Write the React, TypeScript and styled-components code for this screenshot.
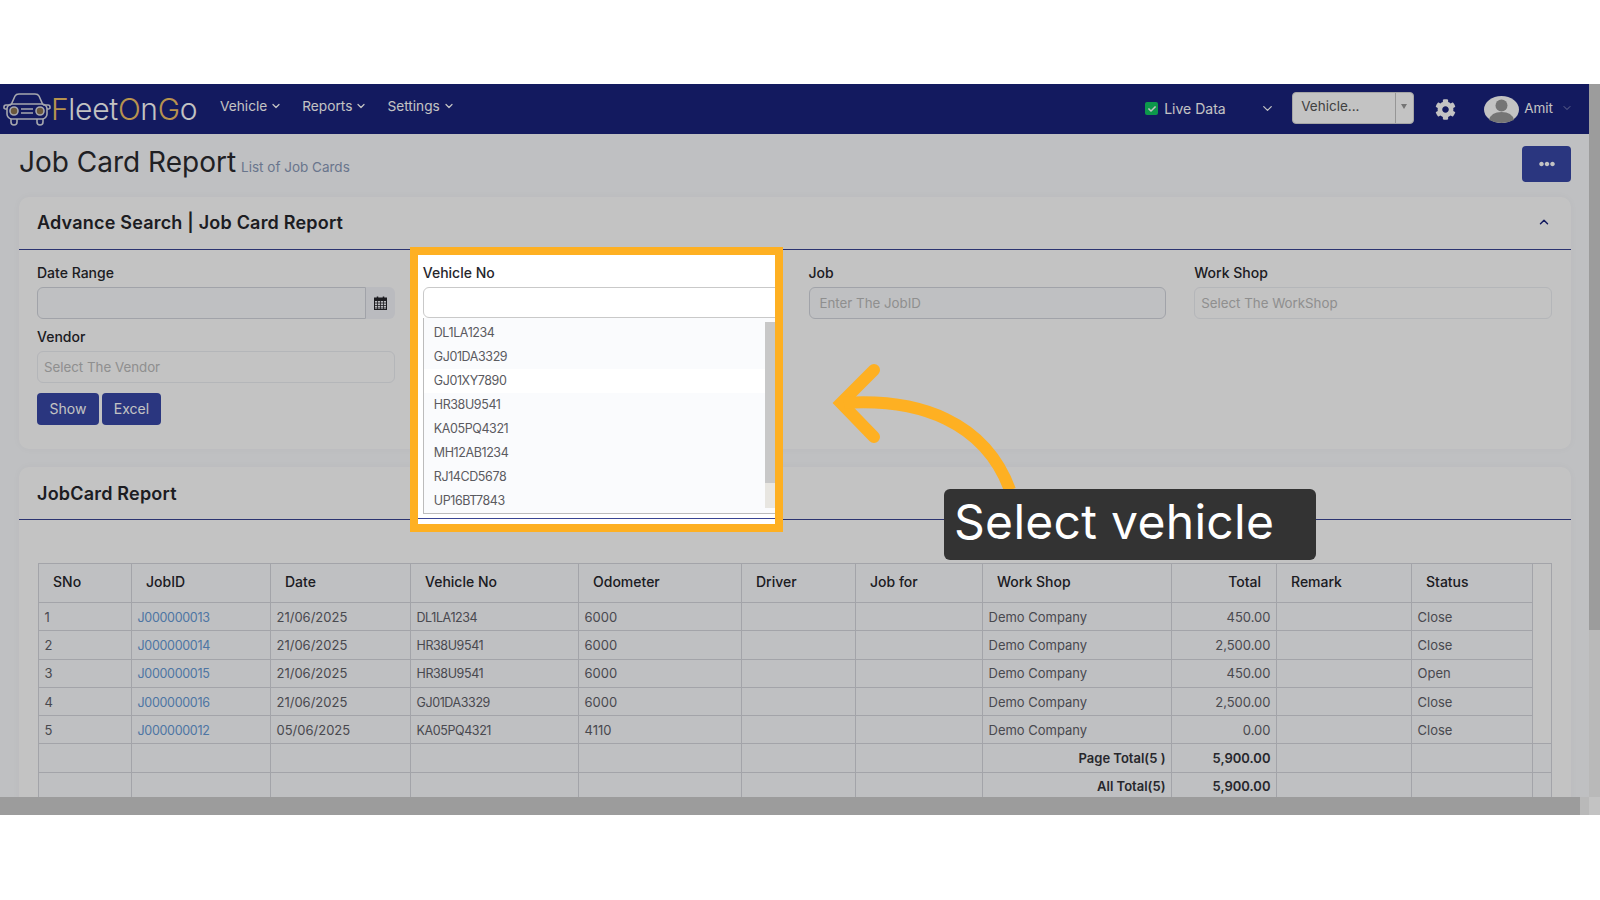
import { createGlobalStyle, styled } from "styled-components";
import { ChevronDown, ChevronUp } from "lucide-react";
import { FaCheck, FaCog, FaEllipsisH } from "react-icons/fa";

const vehicles = [
  "DL1LA1234",
  "GJ01DA3329",
  "GJ01XY7890",
  "HR38U9541",
  "KA05PQ4321",
  "MH12AB1234",
  "RJ14CD5678",
  "UP16BT7843",
];

const jobs = [
  { sno: 1, id: "J000000013", date: "21/06/2025", vehicle: "DL1LA1234", odo: "6000", total: "450.00", status: "Close" },
  { sno: 2, id: "J000000014", date: "21/06/2025", vehicle: "HR38U9541", odo: "6000", total: "2,500.00", status: "Close" },
  { sno: 3, id: "J000000015", date: "21/06/2025", vehicle: "HR38U9541", odo: "6000", total: "450.00", status: "Open" },
  { sno: 4, id: "J000000016", date: "21/06/2025", vehicle: "GJ01DA3329", odo: "6000", total: "2,500.00", status: "Close" },
  { sno: 5, id: "J000000012", date: "05/06/2025", vehicle: "KA05PQ4321", odo: "4110", total: "0.00", status: "Close" },
];

const columnWidths = [93, 139, 140, 168, 163, 114, 127, 189, 105, 135, 121, 19];

function CarLogo() {
  return (
    <svg width="48" height="34" viewBox="0 0 48 34" fill="none" stroke="#d9dbe4" strokeWidth="1.6">
      <path d="M8 13 L12 4 Q13 2 16 2 H32 Q35 2 36 4 L40 13" />
      <path d="M8 13 H3 Q1 13 1 15 V16 Q1 17 4 17" />
      <path d="M40 13 H45 Q47 13 47 15 V16 Q47 17 44 17" />
      <rect x="4" y="12" width="40" height="15" rx="5" />
      <circle cx="11" cy="19" r="4" fill="#8b7350" />
      <circle cx="37" cy="19" r="4" fill="#8b7350" />
      <path d="M18 17 H30 M18 21 H30" />
      <path d="M8 27 V30 Q8 33 11 33 Q14 33 14 30 V27" />
      <path d="M34 27 V30 Q34 33 37 33 Q40 33 40 30 V27" />
    </svg>
  );
}

function Avatar() {
  return (
    <svg width="35" height="27" viewBox="0 0 35 27">
      <ellipse cx="17.5" cy="13.5" rx="17.5" ry="13.5" fill="#fff" />
      <circle cx="17.5" cy="9.5" r="6" fill="#999" />
      <path d="M5 24 Q7 16 17.5 16 Q28 16 30 24 Q24 27 17.5 27 Q11 27 5 24 Z" fill="#999" />
    </svg>
  );
}

function CalendarIcon() {
  return (
    <svg width="13" height="14" viewBox="0 0 13 14" fill="none" stroke="#26262c">
      <rect x="0.5" y="2.5" width="12" height="11" />
      <rect x="0.5" y="2" width="12" height="2.5" fill="#26262c" />
      <path d="M3.5 0.5 V3 M9.5 0.5 V3" strokeWidth="1.5" />
      <path d="M0.5 7 H12.5 M0.5 9.5 H12.5 M0.5 12 H12.5 M3.5 4.5 V13.5 M6.5 4.5 V13.5 M9.5 4.5 V13.5" strokeWidth="0.8" />
    </svg>
  );
}

function NavMenu({ label }: { label: string }) {
  return (
    <NavItem>
      {label}
      <ChevronDown size={12} strokeWidth={2.5} />
    </NavItem>
  );
}

export default function App() {
  return (
    <>
      <GlobalStyle />
      <Screen>
        <Viewport>
          <Main>
            <Navbar>
              <LogoWrap>
                <CarLogo />
                <LogoText>
                  <Gold>F</Gold>leet<Gold>O</Gold>n<Gold>G</Gold>o
                </LogoText>
              </LogoWrap>
              <NavMenu label="Vehicle" />
              <NavMenu label="Reports" />
              <NavMenu label="Settings" />
              <NavRight>
                <LiveCheck>
                  <FaCheck size={8} />
                </LiveCheck>
                <LiveLabel>Live Data</LiveLabel>
                <LiveChevron>
                  <ChevronDown size={15} strokeWidth={2} />
                </LiveChevron>
                <VehicleSelect>
                  <VehicleValue>Vehicle...</VehicleValue>
                  <VehicleCaret />
                </VehicleSelect>
                <GearWrap>
                  <FaCog size={21} />
                </GearWrap>
                <Avatar />
                <UserName>Amit</UserName>
                <UserChevron>
                  <ChevronDown size={12} strokeWidth={1.5} />
                </UserChevron>
              </NavRight>
            </Navbar>

            <TitleRow>
              <Title>Job Card Report</Title>
              <SubTitle>List of Job Cards</SubTitle>
              <MoreButton>
                <FaEllipsisH size={16} />
              </MoreButton>
            </TitleRow>

            <SearchCard>
              <CardHeader>
                <CardTitle>Advance Search | Job Card Report</CardTitle>
                <CollapseIcon>
                  <ChevronUp size={14} strokeWidth={2.5} />
                </CollapseIcon>
              </CardHeader>
              <FormGrid>
                <Field>
                  <FieldLabel>Date Range</FieldLabel>
                  <DateGroup>
                    <DateInput />
                    <DateAddon>
                      <CalendarIcon />
                    </DateAddon>
                  </DateGroup>
                </Field>
                <SpotField>
                  <Spotlight>
                    <FieldLabel>Vehicle No</FieldLabel>
                    <SpotInput />
                    <VehicleList>
                      <VehicleRows>
                        {vehicles.map((v, i) => (
                          <VehicleRow key={v} $active={i === 2}>
                            {v}
                          </VehicleRow>
                        ))}
                      </VehicleRows>
                      <ListScroll>
                        <ListThumb />
                      </ListScroll>
                    </VehicleList>
                    <SpotRule />
                  </Spotlight>
                </SpotField>
                <Field>
                  <FieldLabel>Job</FieldLabel>
                  <TextBox $tinted $indent={10}>Enter The JobID</TextBox>
                </Field>
                <Field>
                  <FieldLabel>Work Shop</FieldLabel>
                  <TextBox $indent={6}>Select The WorkShop</TextBox>
                </Field>
                <Field>
                  <FieldLabel>Vendor</FieldLabel>
                  <TextBox $indent={6}>Select The Vendor</TextBox>
                </Field>
              </FormGrid>
              <ButtonRow>
                <PrimaryButton $width={62}>Show</PrimaryButton>
                <PrimaryButton $width={59}>Excel</PrimaryButton>
              </ButtonRow>
            </SearchCard>

            <ReportCard>
              <CardHeader>
                <CardTitle>JobCard Report</CardTitle>
              </CardHeader>
              <TableWrap>
                <Table>
                  <colgroup>
                    {columnWidths.map((w, i) => (
                      <col key={i} width={w} />
                    ))}
                  </colgroup>
                  <thead>
                    <tr>
                      <Th>SNo</Th>
                      <Th>JobID</Th>
                      <Th>Date</Th>
                      <Th>Vehicle No</Th>
                      <Th>Odometer</Th>
                      <Th>Driver</Th>
                      <Th>Job for</Th>
                      <Th>Work Shop</Th>
                      <Th $right>Total</Th>
                      <Th>Remark</Th>
                      <Th>Status</Th>
                      <GutterHead />
                    </tr>
                  </thead>
                  <tbody>
                    {jobs.map((job) => (
                      <tr key={job.id}>
                        <Td>{job.sno}</Td>
                        <Td>
                          <JobLink>{job.id}</JobLink>
                        </Td>
                        <Td>{job.date}</Td>
                        <Td>
                          <Plate>{job.vehicle}</Plate>
                        </Td>
                        <Td>{job.odo}</Td>
                        <Td />
                        <Td />
                        <Td>Demo Company</Td>
                        <Td $right>{job.total}</Td>
                        <Td />
                        <Td>{job.status}</Td>
                        <GutterCell />
                      </tr>
                    ))}
                    {["Page Total(5 )", "All Total(5)"].map((label) => (
                      <tr key={label}>
                        <Td />
                        <Td />
                        <Td />
                        <Td />
                        <Td />
                        <Td />
                        <Td />
                        <Td $right $bold>{label}</Td>
                        <Td $right $bold>5,900.00</Td>
                        <Td />
                        <Td />
                        <Td />
                      </tr>
                    ))}
                  </tbody>
                </Table>
              </TableWrap>
            </ReportCard>
          </Main>
          <VScroll>
            <VThumb />
          </VScroll>
        </Viewport>
        <HScroll>
          <HThumb />
          <HCorner />
        </HScroll>

        <Dim />
        <CalloutArrow width="200" height="140" viewBox="0 0 200 140" fill="none" stroke="#feb022" strokeWidth="12">
          <path d="M54 20 L21 53 L54 87" strokeLinejoin="miter" strokeLinecap="round" />
          <path d="M24 53 C100 48 165 72 190 140" />
        </CalloutArrow>
        <Callout>Select vehicle</Callout>
      </Screen>
    </>
  );
}

const GlobalStyle = createGlobalStyle`
  * {
    box-sizing: border-box;
  }
  html, body {
    margin: 0;
    background: #fff;
    overflow: hidden;
  }
  body {
    padding-top: 84px;
    height: 900px;
    font-family: Inter, "Liberation Sans", sans-serif;
    color: #5f6068;
  }
`;

const Screen = styled.div`
  position: relative;
  width: 1600px;
  height: 731px;
  overflow: hidden;
`;

const Viewport = styled.div`
  display: flex;
  height: 713px;
`;

const Main = styled.div`
  flex: 1;
  min-width: 0;
  overflow: hidden;
  background: #fafbfe;
`;

const VScroll = styled.div`
  width: 11px;
  background: #f2f2f2;
`;

const VThumb = styled.div`
  height: 546px;
  background: #cccccc;
`;

const HScroll = styled.div`
  display: flex;
  height: 18px;
  background: #f2f2f2;
`;

const HThumb = styled.div`
  width: 1580px;
  background: #cccccc;
`;

const HCorner = styled.div`
  width: 11px;
  margin-left: 9px;
  background: #fff;
`;

const Dim = styled.div`
  position: absolute;
  inset: 0;
  z-index: 2;
  background: rgba(0, 0, 0, 0.235);
`;

const Navbar = styled.div`
  display: flex;
  align-items: center;
  height: 50px;
  padding-left: 3px;
  background: #19227d;
  color: #fff;
`;

const LogoWrap = styled.div`
  display: flex;
  align-items: center;
  gap: 0;
  width: 217px;
`;

const LogoText = styled.div`
  font-size: 30px;
  font-weight: 300;
  letter-spacing: -0.3px;
  color: #fff;
`;

const Gold = styled.span`
  color: #f0c067;
`;

const NavItem = styled.div`
  display: flex;
  align-items: center;
  gap: 3px;
  margin-right: 20px;
  margin-top: -7px;
  font-size: 13.7px;
`;

const NavRight = styled.div`
  display: flex;
  align-items: center;
  margin-left: auto;
  padding-right: 16px;
`;

const LiveCheck = styled.div`
  display: flex;
  align-items: center;
  justify-content: center;
  width: 13px;
  height: 13px;
  margin-top: -1px;
  border-radius: 2px;
  background: #12c763;
  color: #fff;
`;

const LiveLabel = styled.div`
  width: 96px;
  margin-left: 6px;
  margin-top: -1px;
  font-size: 14px;
`;

const LiveChevron = styled.div`
  display: flex;
  width: 32px;
  margin-top: -1px;
`;

const VehicleSelect = styled.div`
  display: flex;
  width: 122px;
  height: 32px;
  margin-right: 21px;
  margin-top: -3px;
  border: 1px solid #d8d8d8;
  border-radius: 4px;
  background: #fff;
`;

const VehicleValue = styled.div`
  flex: 1;
  padding: 5px 8px;
  font-size: 13.5px;
  color: #555;
  border-right: 1px solid #c4c4c4;
`;

const VehicleCaret = styled.div`
  width: 17px;
  position: relative;
  &::after {
    content: "";
    position: absolute;
    left: 5px;
    top: 11px;
    border: 3px solid transparent;
    border-top: 5px solid #999;
  }
`;

const GearWrap = styled.div`
  display: flex;
  width: 49px;
  color: #fff;
`;

const UserName = styled.div`
  margin-left: 5px;
  margin-top: -2px;
  font-size: 13.5px;
`;

const UserChevron = styled.div`
  display: flex;
  margin-left: 8px;
  margin-top: -3px;
  color: #a8acd0;
`;

const TitleRow = styled.div`
  display: flex;
  align-items: center;
  height: 63px;
  padding: 0 18px 8px 19px;
`;

const Title = styled.h1`
  margin: 0;
  font-size: 28px;
  font-weight: 400;
  color: #2a2a2e;
`;

const SubTitle = styled.span`
  margin-left: 5px;
  margin-top: 11px;
  font-size: 13.5px;
  color: #8a9ab8;
`;

const MoreButton = styled.div`
  display: flex;
  align-items: center;
  justify-content: center;
  width: 49px;
  height: 36px;
  margin-left: auto;
  margin-top: 4px;
  border-radius: 4px;
  background: #3747a7;
  color: #fff;
`;

const Card = styled.div`
  margin: 0 18px 0 19px;
  border-radius: 10px 10px 0 0;
  background: #fff;
  box-shadow: 0 0 8px rgba(0, 0, 0, 0.03);
`;

const SearchCard = styled(Card)`
  height: 252px;
  border-radius: 10px;
`;

const CardHeader = styled.div`
  display: flex;
  align-items: center;
  justify-content: space-between;
  height: 53px;
  padding: 0 20px 2px 18px;
  border-bottom: 1px solid #3a4594;
`;

const CardTitle = styled.h3`
  margin: 0;
  font-size: 18px;
  font-weight: 600;
  letter-spacing: 0.2px;
  color: #26262c;
`;

const ReportCard = styled(Card)`
  margin-top: 18px;

  ${CardTitle} {
    margin-top: 2px;
  }
`;

const CollapseIcon = styled.div`
  display: flex;
  color: #19227d;
`;

const FormGrid = styled.div`
  display: grid;
  grid-template-columns: repeat(4, 357.75px);
  column-gap: 28px;
  row-gap: 7px;
  padding: 13px 0 0 18px;
`;

const Field = styled.div`
  display: flex;
  flex-direction: column;
  height: 57px;
`;

const SpotField = styled(Field)`
  position: relative;
  z-index: 3;
`;

const FieldLabel = styled.label`
  display: block;
  height: 20px;
  margin-bottom: 4px;
  font-size: 14px;
  font-weight: 500;
  line-height: 20px;
  color: #26262c;
`;

const DateGroup = styled.div`
  display: flex;
  height: 32px;
`;

const DateInput = styled.div`
  flex: 1;
  border: 1px solid #d3d6dd;
  border-radius: 6px 0 0 6px;
  background: #fafbfe;
`;

const DateAddon = styled.div`
  display: flex;
  align-items: center;
  justify-content: center;
  width: 29px;
  border-radius: 0 6px 6px 0;
  background: #f4f5fa;
`;

const TextBox = styled.div<{ $tinted?: boolean; $indent: number }>`
  height: 32px;
  padding-left: ${(p) => p.$indent}px;
  border: 1px solid ${(p) => (p.$tinted ? "#d3d6dd" : "#eceef2")};
  border-radius: 6px;
  background: ${(p) => (p.$tinted ? "#fafbfe" : "#fff")};
  font-size: 13.3px;
  line-height: 30px;
  color: #bbb;
`;

const Spotlight = styled.div`
  position: absolute;
  left: -13px;
  top: -16px;
  width: 373px;
  height: 285px;
  padding: 8px 0 0 5px;
  overflow: hidden;
  border: 8px solid #feb022;
  background: #fff;
`;

const SpotInput = styled.div`
  width: 372px;
  height: 31px;
  margin-top: 1px;
  border: 1px solid #c9c9c9;
  border-radius: 6px;
  background: #fff;
`;

const VehicleList = styled.div`
  display: flex;
  width: 352px;
  height: 196px;
  border-left: 1px solid #bcbcbc;
  border-bottom: 1px solid #bcbcbc;
  background: #fafbfd;
`;

const VehicleRows = styled.div`
  flex: 1;
  padding-top: 3px;
`;

const VehicleRow = styled.div<{ $active?: boolean }>`
  height: 24px;
  padding-left: 10px;
  font-size: 12.5px;
  letter-spacing: -0.4px;
  line-height: 24px;
  color: #5a5a60;
  background: ${(p) => (p.$active ? "#fff" : "transparent")};
`;

const ListScroll = styled.div`
  width: 10px;
  height: 186px;
  margin-top: 4px;
  background: #e8e6e1;
`;

const ListThumb = styled.div`
  height: 161px;
  background: #c8c8c8;
`;

const SpotRule = styled.div`
  width: 372px;
  height: 1px;
  margin: 4px 0 0 -5px;
  background: #3a4594;
`;

const ButtonRow = styled.div`
  display: flex;
  gap: 3px;
  padding: 9px 0 0 18px;
`;

const PrimaryButton = styled.div<{ $width: number }>`
  width: ${(p) => p.$width}px;
  height: 32px;
  border-radius: 4px;
  background: #3747a7;
  color: #fff;
  font-size: 14px;
  line-height: 32px;
  text-align: center;
`;

const TableWrap = styled.div`
  padding: 43px 19px 0 19px;
`;

const Table = styled.table`
  width: 1513px;
  border-collapse: collapse;
  table-layout: fixed;
  background: #fafbfe;
`;

const Th = styled.th<{ $right?: boolean }>`
  height: 39px;
  padding: 0 15px 3px 14px;
  border: 1.5px solid #d5d7de;
  font-size: 14px;
  font-weight: 500;
  color: #26262c;
  text-align: ${(p) => (p.$right ? "right" : "left")};
`;

const Td = styled.td<{ $right?: boolean; $bold?: boolean }>`
  height: 28.3px;
  padding: 0 5.5px;
  border: 1.5px solid #d5d7de;
  font-size: 13px;
  font-weight: ${(p) => (p.$bold ? 600 : 400)};
  color: ${(p) => (p.$bold ? "#33333a" : "#5f6068")};
  text-align: ${(p) => (p.$right ? "right" : "left")};
`;

const GutterHead = styled.th`
  border: 1px solid #d5d7de;
  border-bottom: none;
  background: #fff;
`;

const GutterCell = styled.td`
  border-right: 1px solid #d5d7de;
  background: #fff;
`;

const JobLink = styled.a`
  font-size: 12.5px;
  letter-spacing: -0.3px;
  color: #669ad6;
`;

const Plate = styled.span`
  font-size: 12.5px;
  letter-spacing: -0.4px;
`;

const CalloutArrow = styled.svg`
  position: absolute;
  left: 820px;
  top: 266px;
  z-index: 3;
`;

const Callout = styled.div`
  position: absolute;
  left: 944px;
  top: 405px;
  z-index: 4;
  width: 372px;
  height: 71px;
  padding-left: 10px;
  border-radius: 6px;
  background: #333;
  color: #fff;
  font-size: 48px;
  letter-spacing: 0.3px;
  line-height: 65px;
`;
